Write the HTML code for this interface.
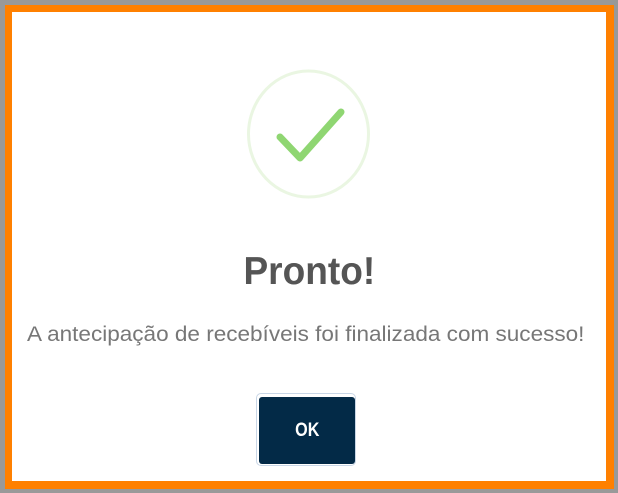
<!DOCTYPE html>
<html><head><meta charset="utf-8"><style>
html,body{margin:0;padding:0;width:618px;height:493px;overflow:hidden;background:#999;font-family:"Liberation Sans",sans-serif}
.frame{position:absolute;left:5px;top:5px;width:594px;height:469px;border:7px solid #ff8000;border-bottom-width:8px;border-right-width:8px;background:#fff}
.t{position:absolute;left:0;width:618px;text-align:center;white-space:nowrap}
.t span{display:inline-block}
.btnout{position:absolute;left:256px;top:393px;width:100px;height:73px;border:1px solid #c9d6e6;border-radius:5px;box-sizing:border-box}
.btn{position:absolute;left:259px;top:397px;width:96px;height:67px;background:#032a47;border-radius:3px;color:#fff;font-size:19px;font-weight:bold;text-align:center;line-height:67px}
</style></head><body>
<div class="frame"></div>
<svg style="position:absolute;left:0;top:0" width="618" height="493">
<ellipse cx="308.5" cy="134" rx="60" ry="63" fill="none" stroke="#eaf6e2" stroke-width="3"/>
<polyline points="280,137 300,158 341,112" fill="none" stroke="#8fd672" stroke-width="7" stroke-linecap="round" stroke-linejoin="round"/>
</svg>
<div class="t" style="top:250px;font-size:39px;font-weight:bold;color:#555"><span style="transform:scaleX(0.95)">Pronto!</span></div>
<div class="t" style="top:323px;left:-3px;font-size:21px;color:#777"><span style="transform:scaleX(1.073)">A antecipação de recebíveis foi finalizada com sucesso!</span></div>
<div class="btnout"></div>
<div class="btn"><span style="display:inline-block;transform:scaleX(0.85)">OK</span></div>
</body></html>
